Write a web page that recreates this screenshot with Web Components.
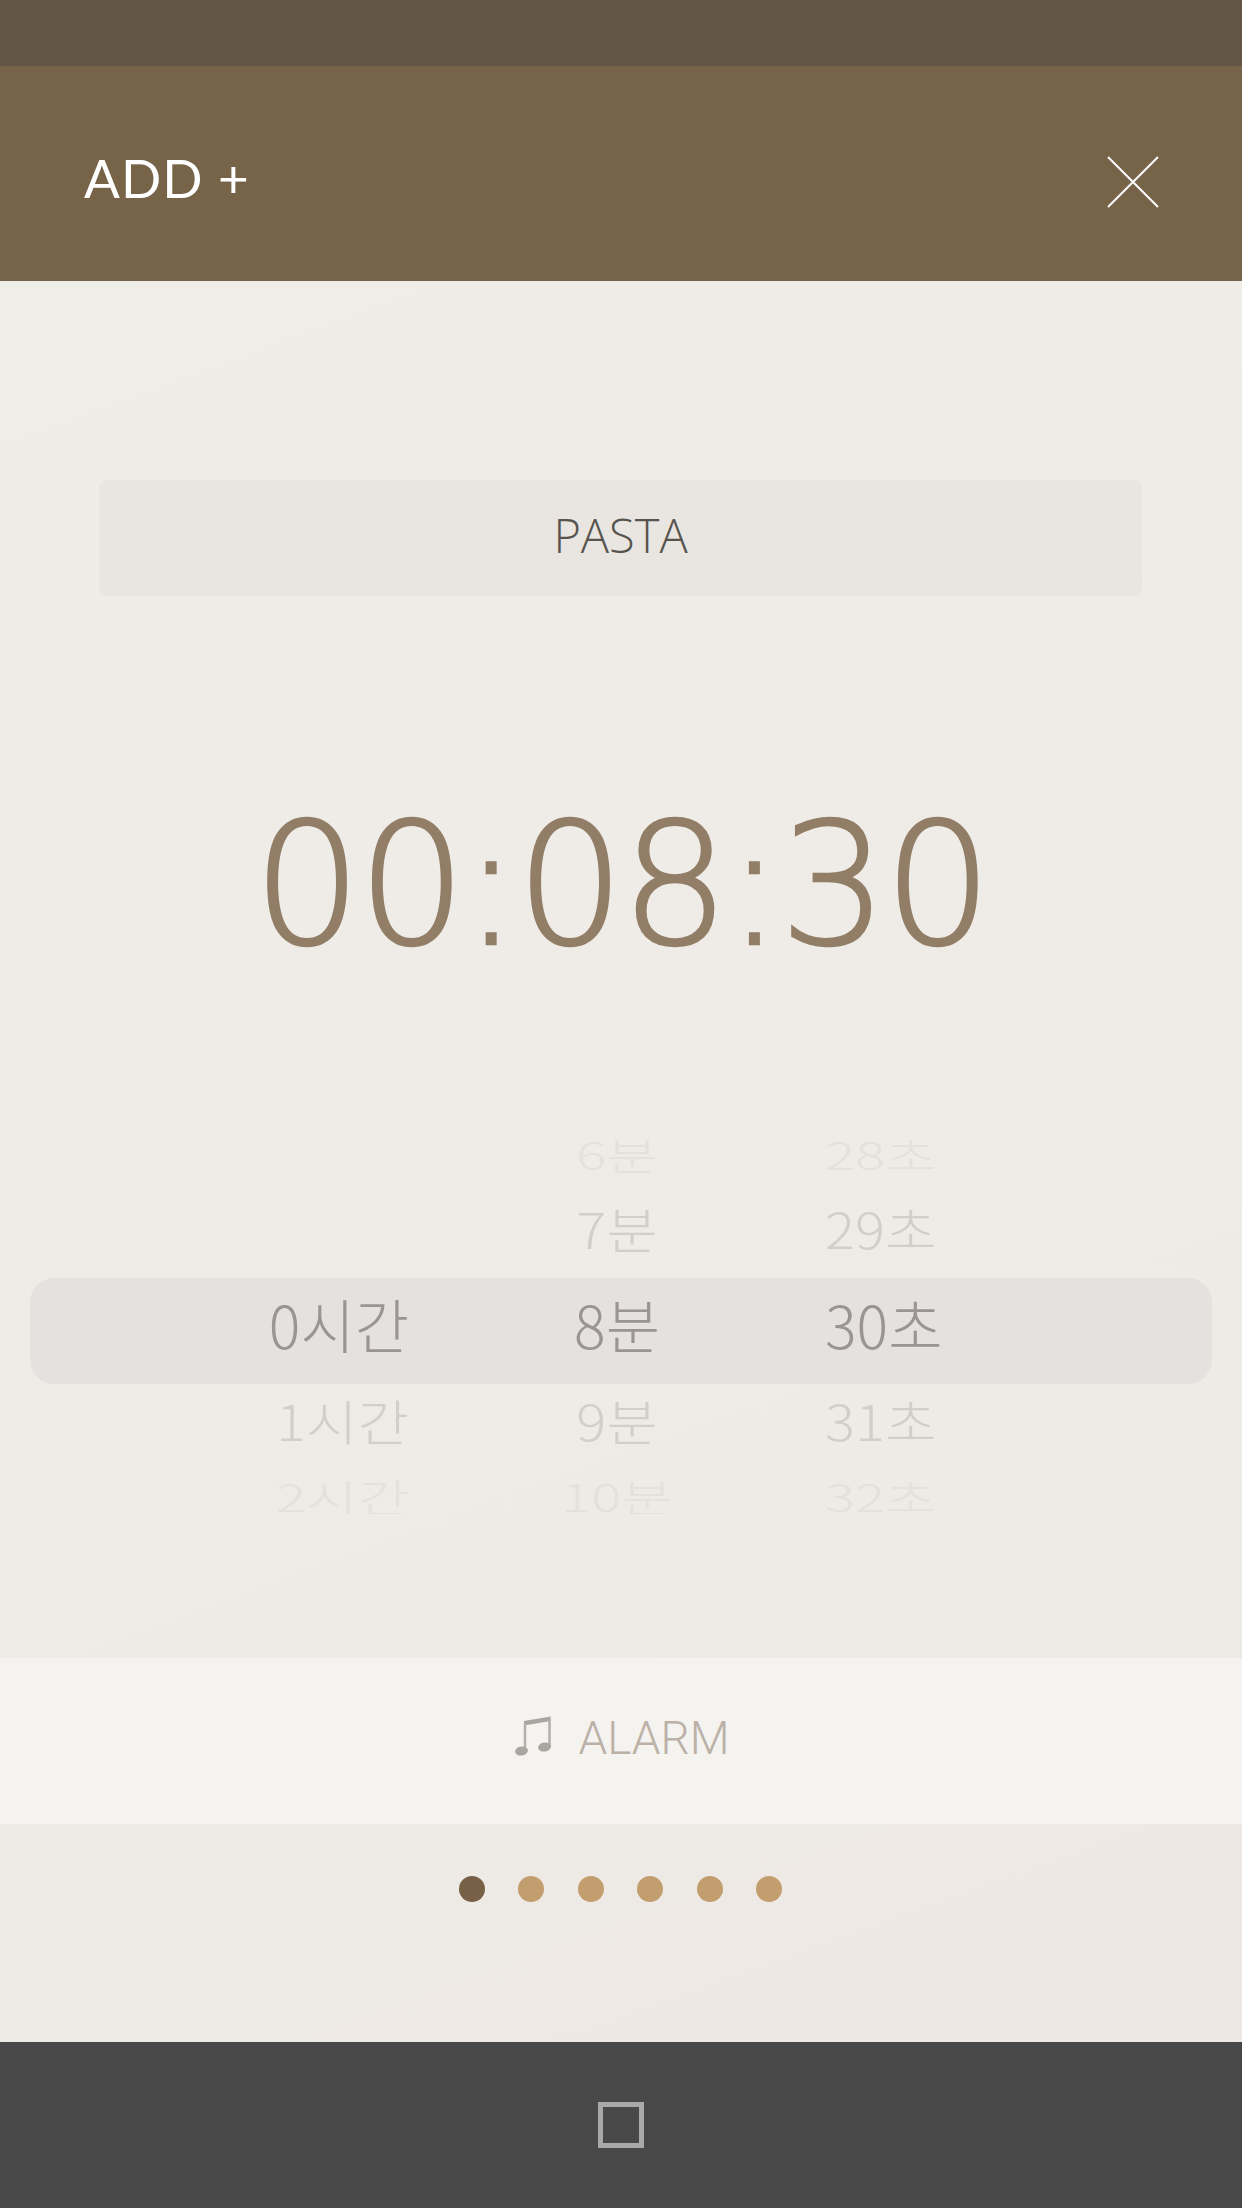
<!DOCTYPE html>
<html lang="ko">
<head>
<meta charset="utf-8">
<title>ADD</title>
<style>
  html, body { margin: 0; padding: 0; }
  body { width: 1242px; height: 2208px; overflow: hidden; font-family: "Open Sans", "Noto Sans CJK KR", sans-serif; }
</style>
</head>
<body>
<timer-screen>
  <status-strip></status-strip>
  <add-header label="ADD +"></add-header>
  <add-body>
    <name-field>PASTA</name-field>
    <timer-display>00:08:30</timer-display>
    <time-picker>
      <picker-row tier="far-top"><span slot="min">6분</span><span slot="sec">28초</span></picker-row>
      <picker-row tier="near-top"><span slot="min">7분</span><span slot="sec">29초</span></picker-row>
      <picker-row tier="selected"><span slot="hour">0시간</span><span slot="min">8분</span><span slot="sec">30초</span></picker-row>
      <picker-row tier="near-bottom"><span slot="hour">1시간</span><span slot="min">9분</span><span slot="sec">31초</span></picker-row>
      <picker-row tier="far-bottom"><span slot="hour">2시간</span><span slot="min">10분</span><span slot="sec">32초</span></picker-row>
    </time-picker>
    <alarm-row>ALARM</alarm-row>
    <page-dots count="6" active="0"></page-dots>
  </add-body>
  <nav-bar></nav-bar>
</timer-screen>

<script>
class TimerScreen extends HTMLElement {
  constructor() {
    super()
    this.attachShadow({ mode: 'open' })
    this.shadowRoot.innerHTML = `
      <style>
        :host { display: flex; flex-direction: column; width: 1242px; height: 2208px; }
      </style>
      <slot></slot>
    `
  }
}
customElements.define('timer-screen', TimerScreen)

class StatusStrip extends HTMLElement {
  constructor() {
    super()
    this.attachShadow({ mode: 'open' })
    this.shadowRoot.innerHTML = `
      <style>
        :host { display: block; height: 66px; background: #645646; }
      </style>
    `
  }
}
customElements.define('status-strip', StatusStrip)

class AddHeader extends HTMLElement {
  constructor() {
    super()
    this.attachShadow({ mode: 'open' })
    this.shadowRoot.innerHTML = `
      <style>
        :host {
          display: flex; align-items: center; justify-content: space-between;
          height: 215px; box-sizing: border-box; padding: 16px 83px 0 84px;
          background: #776448;
        }
        .title { margin-top: -8px; font: 400 53px/1 Lato, "Open Sans", sans-serif; color: #fff; letter-spacing: 1px; }
        svg { display: block; }
      </style>
      <span class="title">${this.getAttribute('label')}</span>
      <svg width="52" height="52" viewBox="0 0 52 52" fill="none" stroke="#fff" stroke-width="2">
        <path d="M1 1 L51 51 M51 1 L1 51"/>
      </svg>
    `
  }
}
customElements.define('add-header', AddHeader)

class AddBody extends HTMLElement {
  constructor() {
    super()
    this.attachShadow({ mode: 'open' })
    this.shadowRoot.innerHTML = `
      <style>
        :host {
          display: flex; flex-direction: column; flex: 1;
          padding-top: 199px;
          background: linear-gradient(160deg, #efede8 0%, #efece8 45%, #ede8e4 100%);
        }
      </style>
      <slot></slot>
    `
  }
}
customElements.define('add-body', AddBody)

class NameField extends HTMLElement {
  constructor() {
    super()
    this.attachShadow({ mode: 'open' })
    this.shadowRoot.innerHTML = `
      <style>
        :host {
          display: flex; align-items: center; justify-content: center;
          height: 116px; box-sizing: border-box; padding-bottom: 6px;
          margin: 0 100px 0 99px;
          background: #e9e6e1; border-radius: 8px;
          font: 300 47px/1 "Open Sans", sans-serif; color: #57544f;
        }
      </style>
      <slot></slot>
    `
  }
}
customElements.define('name-field', NameField)

class TimerDisplay extends HTMLElement {
  constructor() {
    super()
    this.attachShadow({ mode: 'open' })
    this.shadowRoot.innerHTML = `
      <style>
        :host {
          display: block; height: 544px; box-sizing: border-box; padding-top: 189px;
          text-align: center; white-space: nowrap;
          font: 200 170px/200px "DejaVu Sans", "Open Sans", sans-serif; color: #927e67;
          letter-spacing: -3.5px; -webkit-text-stroke: 2.5px #927e67;
        }
      </style>
      <slot></slot>
    `
  }
}
customElements.define('timer-display', TimerDisplay)

class TimePicker extends HTMLElement {
  constructor() {
    super()
    this.attachShadow({ mode: 'open' })
    this.shadowRoot.innerHTML = `
      <style>
        :host { display: flex; flex-direction: column; margin: 0 30px; height: 518px; }
      </style>
      <slot></slot>
    `
  }
}
customElements.define('time-picker', TimePicker)

const ROW_TIERS = {
  'far-top': { height: 43, size: 56, scale: 0.68, color: '#e4e1dd', shift: -20, align: 'start' },
  'near-top': { height: 95, size: 56, scale: 0.87, color: '#d2cfcb', shift: -5, align: 'center' },
  'selected': { height: 106, size: 59, scale: 1, color: '#9a9593', shift: -13, align: 'center' },
  'near-bottom': { height: 76, size: 56, scale: 0.87, color: '#d2cfcb', shift: -5, align: 'center' },
  'far-bottom': { height: 54, size: 56, scale: 0.68, color: '#e4e1dd', shift: 2, align: 'start' }
}

class PickerRow extends HTMLElement {
  constructor() {
    super()
    this.attachShadow({ mode: 'open' })
    const tier = ROW_TIERS[this.getAttribute('tier')]
    const isSelected = this.getAttribute('tier') === 'selected'
    this.shadowRoot.innerHTML = `
      <style>
        :host {
          display: grid; grid-template-columns: 379px 416px 1fr;
          height: ${tier.height}px; overflow: hidden;
          align-items: ${tier.align};
          border-radius: ${isSelected ? 24 : 0}px;
          background: ${isSelected ? '#e5e1de' : 'transparent'};
          font: 300 ${tier.size}px/1.2 "Noto Sans CJK KR", "Open Sans", sans-serif;
          color: ${tier.color};
        }
        .cell { margin-top: ${tier.shift}px; transform: scaleY(${tier.scale}); white-space: nowrap; }
        .hour { text-align: right; }
        .min { text-align: center; }
        .sec { text-align: left; }
      </style>
      <div class="cell hour"><slot name="hour"></slot></div>
      <div class="cell min"><slot name="min"></slot></div>
      <div class="cell sec"><slot name="sec"></slot></div>
    `
  }
}
customElements.define('picker-row', PickerRow)

class AlarmRow extends HTMLElement {
  constructor() {
    super()
    this.attachShadow({ mode: 'open' })
    this.shadowRoot.innerHTML = `
      <style>
        :host {
          display: flex; align-items: center; justify-content: center; gap: 27px;
          height: 166px; box-sizing: border-box; padding: 0 0 6px 3px; background: #f5f3f0;
          font: 300 46px/1 Roboto, "Open Sans", sans-serif; color: #bbb1a7;
        }
        svg { display: block; margin-top: -4px; }
      </style>
      <svg width="36" height="40" viewBox="0 0 36 40">
        <path d="M9 9.5 L35.5 5 L35.5 0.5 L9 5 Z" fill="#a9a5a0"/>
        <path d="M10 7 V35 M34.5 2 V31" stroke="#b3afaa" stroke-width="2.5" fill="none"/>
        <ellipse cx="6.5" cy="35" rx="6.5" ry="4.5" fill="#a9a5a0" transform="rotate(-12 6.5 35)"/>
        <ellipse cx="29.5" cy="31" rx="6.5" ry="4.5" fill="#a9a5a0" transform="rotate(-12 29.5 31)"/>
      </svg>
      <span><slot></slot></span>
    `
  }
}
customElements.define('alarm-row', AlarmRow)

class PageDots extends HTMLElement {
  constructor() {
    super()
    this.attachShadow({ mode: 'open' })
    const count = Number(this.getAttribute('count'))
    const active = Number(this.getAttribute('active'))
    let dots = ''
    for (let i = 0; i < count; i++) {
      dots += `<i class="${i === active ? 'on' : ''}"></i>`
    }
    this.shadowRoot.innerHTML = `
      <style>
        :host { display: flex; justify-content: center; gap: 33.6px; padding: 52px 1px 0 0; }
        i { display: block; width: 26px; height: 26px; border-radius: 50%; background: #c29e6e; }
        i.on { background: #776146; }
      </style>
      ${dots}
    `
  }
}
customElements.define('page-dots', PageDots)

class NavBar extends HTMLElement {
  constructor() {
    super()
    this.attachShadow({ mode: 'open' })
    this.shadowRoot.innerHTML = `
      <style>
        :host {
          display: flex; justify-content: center; height: 166px; box-sizing: border-box; padding-top: 60px;
          background: #484848;
        }
        .recent { width: 46px; height: 46px; box-sizing: border-box; border: 5px solid #a8a8a8; }
      </style>
      <div class="recent"></div>
    `
  }
}
customElements.define('nav-bar', NavBar)
</script>
</body>
</html>
